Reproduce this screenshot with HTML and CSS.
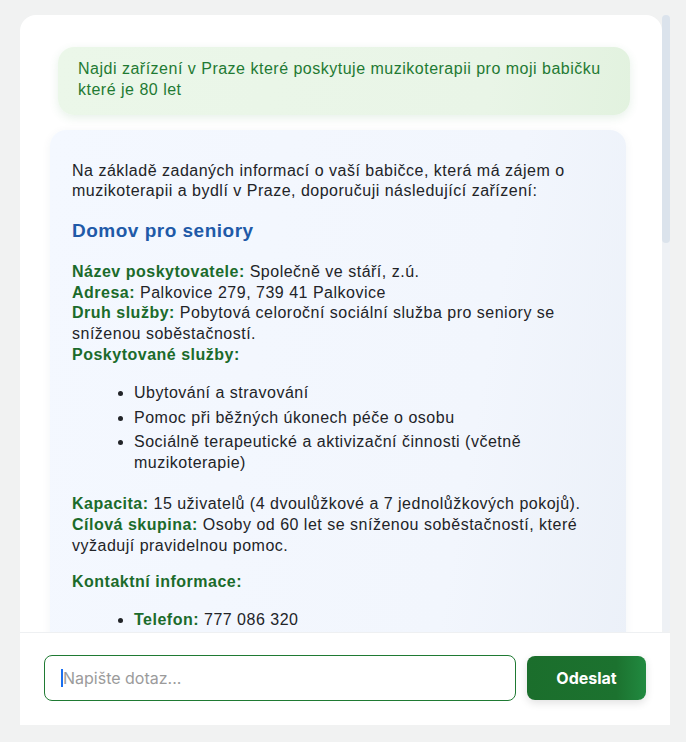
FILE: index.html
```html
<!DOCTYPE html>
<html lang="cs">
<head>
<meta charset="utf-8">
<title>Chat</title>
<link rel="stylesheet" href="styles.css">
</head>
<body>
<main class="chat">
  <section class="messages">
    <div class="viewport">
      <div class="thread">
        <div class="msg msg-user">Najdi zařízení v Praze které poskytuje muzikoterapii pro moji babičku které je 80 let</div>
        <div class="msg msg-bot">
          <p>Na základě zadaných informací o vaší babičce, která má zájem o muzikoterapii a bydlí v Praze, doporučuji následující zařízení:</p>
          <h3>Domov pro seniory</h3>
          <p><b>Název poskytovatele:</b> Společně ve stáří, z.ú.<br>
          <b>Adresa:</b> Palkovice 279, 739 41 Palkovice<br>
          <b>Druh služby:</b> Pobytová celoroční sociální služba pro seniory se sníženou soběstačností.<br>
          <b>Poskytované služby:</b></p>
          <ul>
            <li>Ubytování a stravování</li>
            <li>Pomoc při běžných úkonech péče o osobu</li>
            <li>Sociálně terapeutické a aktivizační činnosti (včetně muzikoterapie)</li>
          </ul>
          <p><b>Kapacita:</b> 15 uživatelů (4 dvoulůžkové a 7 jednolůžkových pokojů).<br>
          <b>Cílová skupina:</b> Osoby od 60 let se sníženou soběstačností, které vyžadují pravidelnou pomoc.</p>
          <p><b>Kontaktní informace:</b></p>
          <ul>
            <li><b>Telefon:</b> 777 086 320</li>
            <li><b>E-mail:</b> info@spolecnevestari.cz</li>
            <li><b>Web:</b> www.spolecnevestari.cz</li>
          </ul>
        </div>
      </div>
    </div>
    <div class="scrollbar"><div class="thumb"></div></div>
  </section>
  <form class="composer" onsubmit="return false">
    <div class="field">
      <input class="input" type="text" placeholder="Napište dotaz...">
    </div>
    <button class="send" type="submit">Odeslat</button>
  </form>
</main>
</body>
</html>
```

FILE: styles.css
```css
* { box-sizing: border-box; }

html, body {
  margin: 0;
  padding: 0;
  background: #f1f2f2;
  font-family: "Liberation Sans", Arial, sans-serif;
}

.chat {
  width: 650px;
  height: 710px;
  margin: 15px 0 0 20px;
  display: flex;
  flex-direction: column;
}

.messages {
  flex: 1;
  min-height: 0;
  display: flex;
}

.viewport {
  flex: 1;
  min-width: 0;
  overflow: hidden;
  background: #ffffff;
  border-radius: 16px 16px 0 0;
}

.scrollbar {
  flex: none;
  width: 8px;
  background: #eef1f5;
  border-radius: 4px;
}

.thumb {
  height: 228px;
  background: #dbe3ec;
  border-radius: 4px;
}

.thread {
  padding: 32px 32px 0 30px;
  display: flex;
  flex-direction: column;
  gap: 15px;
}

.msg {
  font-size: 16px;
  line-height: 1.3;
  letter-spacing: 0.5px;
  border-radius: 16px;
}

.msg-user {
  align-self: flex-end;
  width: 572px;
  padding: 12px 20px 14px;
  color: #1f7a33;
  background: linear-gradient(100deg, #ebf7e9 0%, #e9f5e7 75%, #e2f2df 100%);
  box-shadow: 0 3px 10px rgba(60, 140, 70, 0.12);
}

.msg-bot {
  width: 576px;
  padding: 15px 22px 20px;
  color: #222428;
  background: linear-gradient(100deg, #f4f8ff 0%, #f2f6fd 70%, #ebf0f8 100%);
  box-shadow: 0 2px 10px rgba(40, 60, 100, 0.06);
}

.msg-bot p {
  margin: 16px 0;
}

.msg-bot b {
  color: #1b6b2b;
}

.msg-bot h3 {
  margin: 17px 0 18px;
  font-size: 19px;
  line-height: 1.3;
  color: #1f5aa8;
}

.msg-bot ul {
  margin: 17px 0 20px;
  padding-left: 62px;
}

.msg-bot li + li {
  margin-top: 4px;
}

.composer {
  flex: none;
  display: flex;
  gap: 11px;
  padding: 22px 24px 24px;
  background: #ffffff;
  border-top: 1px solid #eef0f2;
}

.field {
  flex: 1;
  position: relative;
}

.field::before {
  content: "";
  position: absolute;
  left: 17px;
  top: 14px;
  width: 2px;
  height: 18px;
  background: #1a6ff0;
}

.input {
  width: 100%;
  height: 46px;
  margin: 0;
  padding: 0 18px;
  border: 1px solid #1f7a33;
  border-radius: 8px;
  font-family: Inter, "Liberation Sans", sans-serif;
  font-size: 16px;
  color: #222;
  background: #fff;
  outline: none;
}

.input::placeholder {
  color: #9b9b9b;
}

.send {
  flex: none;
  width: 119px;
  height: 44px;
  margin-top: 1px;
  border: none;
  border-radius: 8px;
  background: linear-gradient(90deg, #1b6e2c 0%, #1c722f 75%, #218a40 100%);
  color: #ffffff;
  font-family: Inter, "Liberation Sans", sans-serif;
  font-weight: 700;
  font-size: 16px;
  box-shadow: 0 3px 8px rgba(0, 0, 0, 0.12);
  cursor: pointer;
}
```
